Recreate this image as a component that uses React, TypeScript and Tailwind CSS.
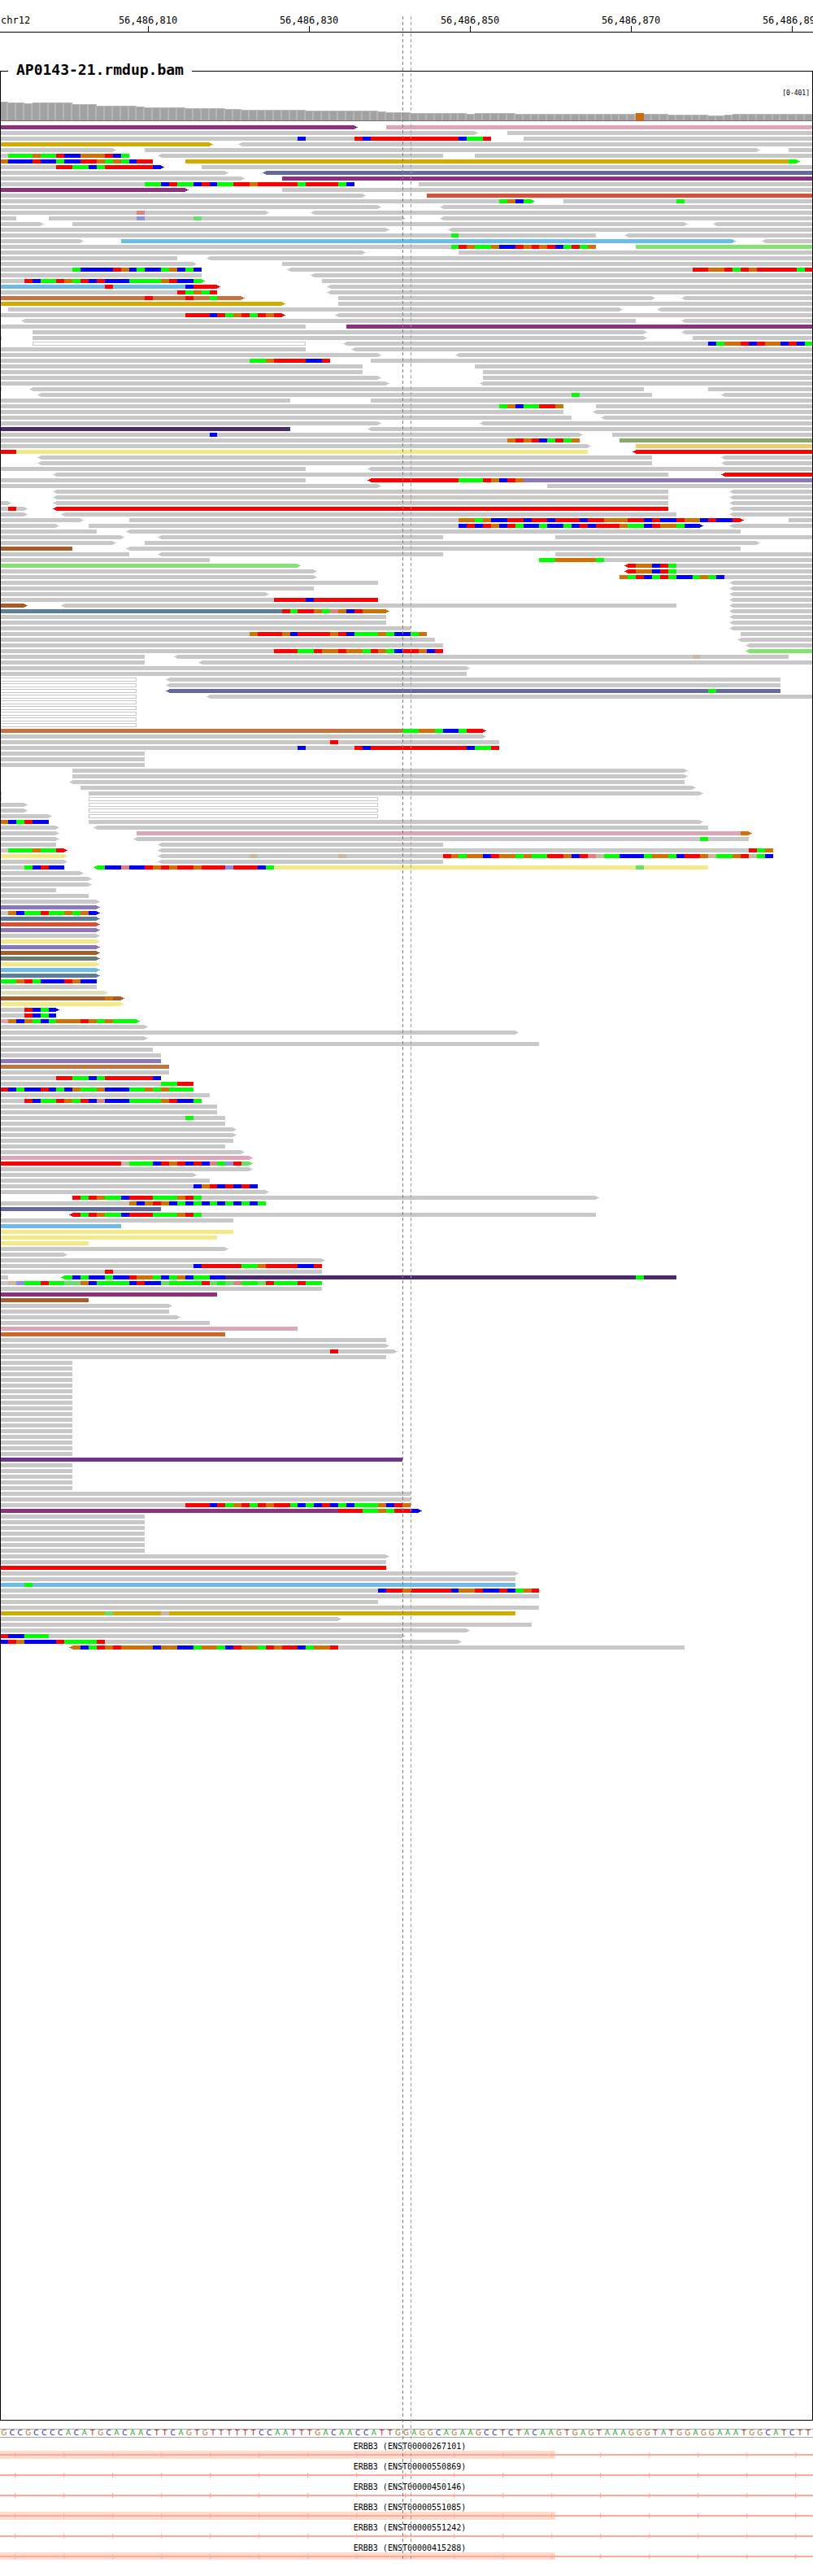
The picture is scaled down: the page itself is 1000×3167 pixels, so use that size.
import React from 'react';

// colour keys used in the read strings below
const COLORS: Record<string, string> = {
  g: '#c8c8c8', a: '#00ff00', c: '#0000ff', o: '#d17105', t: '#ff0000',
  p: '#8f2f7f', P: '#dba6b6', y: '#d4aa00', s: '#656a9c', r: '#d85038',
  l: '#6cbce6', L: '#84e174', b: '#c3743f', d: '#4b2a6e', n: '#8aa865',
  u: '#e8d070', e: '#f3ea87', v: '#8c78b8', w: '#a65d29', T: '#5b7f9a',
  k: '#6e7a6e', f: '#dce5b9', m: '#70368f', O: '#cd6628', R: '#e08080',
  B: '#9090e0', A: '#66e066', G: '#c8b8a0', x: '#ffffff',
};

// one string per row, reads split by a space: start colour break colour ... end, < or > for the strand arrow
const ROWS: string[] = [
  '0p686> 745P1568',
  '0g919> 978g1568',
  '0g574c590g684t699c714t884c900a931t947 1010g1568',
  '0y404> <465g1568',
  '0g219> 279g1461> 1521g1568',
  '0g16a63o78a108t124c155o202t218c234a248 <310g855 916g1568',
  '0o16c63t78c108a124c155t187o202a218o234a248c263t295 358y1522a1538>',
  '0g108t140a171c187a202t295c310> 389g1568',
  '0g434> <512s1568',
  '0g466> 544p1568',
  '0g279a310c326t342a373c389t403c419a450t481o497t574a590t652a668c684 808g1568',
  '0p358> 544g1568',
  '0g700> 823r1568',
  '0g963a978o994c1010a1024> 1087g1305a1320g1568',
  '0g730> <855g1568',
  '0g263R279g513> <605g1568',
  '0g31 93g263B279g373A389g778> <855g1568',
  '0g78> 140g1320> <1382g1568',
  '0g745> <868g1568',
  '0g869a884g1149 <1210g1568',
  '0g155> 234l1414> <1475g1568',
  '0g869a884t900o916a947o963c994t1010o1024t1040o1055t1071c1087a1102t1118a1134o1149 1226L1568',
  '0g700> 884g1568',
  '0g342 <403g1568',
  '0g373> 544g1568',
  '0g140a155c218t234o248c263a279c310a326o342c358a373c389 <558g1334t1366o1397t1413a1428t1444o1460t1537a1552t1568',
  '0g389 <605g1568',
  '0g47t63c78a108t124o140a155t171c187t202c248a310o326t342c373a389> 621g1568',
  '0l202t218l358c373t419> <636g1568',
  '0g342t358a373o389a403t419 <636g1568',
  '0b279t295b358t373b403a419b466> 652g1258> <1320g1568',
  '0y544> 652g1568',
  '16g1196> <1272g1568',
  '0g358t403c419t434a450o466t481a497t513o528t544> <652g1568',
  '<47g1226 <1320g1568',
  '0g590 668p1568',
  '63g1243> <1320g1568',
  '0g3 63g1243> 1334g1568',
  '63x590> <668g1366c1382a1397o1428t1444c1460t1475o1505c1521t1537c1552a1568',
  '0g590 <683g1568',
  '0g730> <884g1568',
  '0g481a513o528t590c621t636 714g1568',
  '0g699 916g1568',
  '0g699 931g1568',
  '0g730> 931g1568',
  '0g745> <931g1568',
  '0g3 <63g1243 1366g1568',
  '<78g1102a1118g1258 <1397g1568',
  '0g558 714g1568',
  '0g963a978o994c1010a1040t1071o1087 1149g1568',
  '0g1087 <1149g1568',
  '0g1102 <1165g1568',
  '0g730> <931g1568',
  '0d558 <714g1568',
  '0g403c419g1118> 1180g1568',
  '0g978o994t1010o1024t1040c1055a1071t1087a1102o1118 1196n1568',
  '0g1134> 1226u1568',
  '0t31e1134 <1226t1568',
  '<78g1258 <1397g1568',
  '<78g1258 <1397g1568',
  '0g590 <714g1568',
  '<108g1289 <1397t1568',
  '0g590 <714t884a931t947o963c978t994o1010v1568',
  '0g730> 1055g1568',
  '<108g1289 <1413g1568',
  '<108g1289 <1413g1568',
  '0g16> <108g1289 <1413g1568',
  '0g16t31g47> <108t1289 <1413g1568',
  '0g47> <124g1305 <1413g1568',
  '0g155> 248g884o916a931o947c978t1010c1024t1055c1071t1118c1134t1165o1210t1242c1258t1273c1305t1320o1350c1366t1382c1413t1428> 1521g1568',
  '0g108> 171g884c900t916c931t947o963c978t994a1010c1040a1055c1087a1102c1118t1134c1149t1196o1210a1242c1258t1273o1305a1320c1350> <1413g1568',
  '0g187 <248g1428',
  '0g233> <310g855 1071g1568',
  '0g219> 279g1461>',
  '0w140 <248g1428',
  '0g248 <310g855 1071g1568',
  '0g403 1040a1071o1149a1165g1568',
  '0L574> <1210t1226o1258c1273t1289a1305g1568',
  '0g605> <1210t1226o1258c1273t1289a1305g1568',
  '0g605> 1196o1210a1226t1242c1258a1273t1289a1305c1334a1350o1366a1382c1397g1568',
  '0g729 <1413g1568',
  '0g605 <1413g1568',
  '0g513> <1413g1568',
  '0g528t590c605t729 <1413g1568',
  '0w47> <124g1305 <1413g1568',
  '0T544t558a574t605o621a636R652o668c684t699o745> <1413g1568',
  '0g745 <1413g1568',
  '0g745 <1413g1568',
  '0g792 <1413g1568',
  '0g481o497t544o558c574t636o652t668c684a729o745a760c792a808o823 1428g1568',
  '0g839 <1428g1568',
  '0g855 <1444g1568',
  '0g528t574a605t621o652t668o699a714t729o745a760c776t808o823c839t855 <1444L1568',
  '0g279 <342g1334G1350g1521',
  '0g279 <389g1568',
  '0g900>',
  '0g900',
  '0x263 <326g1505',
  '0x263 <326g1505',
  '0x263 <326s1366a1382s1505',
  '0x263 <403g1568',
  '0x263', '0x263', '0x263', '0x263', '0x263',
  '0b776a808o839a855c884a900t931>',
  '0g931>',
  '0g636t652g963',
  '0g574c590g684t699c714t900c916a947t963',
  '0g279', '0g279', '0g279',
  '140g1320>',
  '140g1320>',
  '<140g1320',
  '155g1336>',
  '0g3 171g1350>',
  '0g3 171x730>',
  '0g47> 171x730>',
  '0g47> 171x730>',
  '0g93> 171x730>',
  '0o16c31a47t63c93 171g1350>',
  '0g108> <186g1366',
  '0g108> 263P1428o1444>',
  '0g108> <263g1350a1366g1444',
  '0g108 <310g855',
  '0g16a63o78a108t124> <310g1444t1460a1475o1490',
  '0e124> <310g481G497g652G668g855t869o884a900o931c947t963o994a1010o1024a1055t1087o1102c1118t1134R1149G1165a1196c1242a1258o1289a1305c1320t1350o1366G1382a1413o1428t1444G1460a1475c1490',
  '0g124> <310g855',
  '0g47a63c78t93c124 <187a202c234R248c279t295o310t326o342t373o389t434B450t497c513a528e1226A1242e1366',
  '0g155>',
  '0g171>',
  '0g171>',
  '0g108',
  '0g171',
  '0g187>',
  '0v187>',
  '0g16o31c47a78t93a124o140a155o171c187>',
  '0T187>',
  '0r187>',
  '0v187>',
  '0g187>',
  '0e187>',
  '0v187>',
  '0w187>',
  '0k187>',
  '0e187>',
  '0l187>',
  '0T187>',
  '0a31o47t63a78c124t140o155c187',
  '0g187',
  '0f202>',
  '0w202o218w234>',
  '0e234>',
  '0g47t63c78a93c108>',
  '0g47t63c78a93c108',
  '0P16o31c47o63a78c93a108o155t171o187a202o218a263>',
  '0g279>',
  '0g994>',
  '0g279>',
  '0g1040',
  '0g295',
  '0g310',
  '0v310',
  '0b326',
  '0g326',
  '0g108t140a171c187a202t295c310',
  '0g310a342t373',
  '0t16c31a47c78t93c108a124c140o155a187o202c248a279o295a310o326a373',
  '0g403',
  '0g47t63c78a108t124o140a155t171c187R202c248a310o326t342c373a389',
  '0g419',
  '0g419',
  '0g358a373g434',
  '0g434',
  '0g450>',
  '0g450>',
  '0g450',
  '0g434',
  '0g466>',
  '0P481>',
  '0t234G248a295c310t326o342t358c373t389c403R419a434B450t466A481>',
  '0g481>',
  '0g373>',
  '0g403',
  '0g373c389o403t419c434t450c466t481c497',
  '0g513>',
  '140t155a171t187o202a234c248t295a342o358t373a389g1149>',
  '0g248o263c279o295t310o326c342a358c373a389c403a419c434a450c466a481c497a513',
  '0s310',
  '0g3 <140t155a171t187o202a234c248t295a342o358t373a389g1149',
  '0g450',
  '0l234',
  '0e450',
  '0e419',
  '0e171',
  '0g434>',
  '0g124>',
  '0g621>',
  '0g373c389t466a497o513t574c605t621',
  '0g202t218g621',
  '0g16 <124a140c155a171c202a218c248t263o295a310c326a342o358c373a403c434d1226a1242d1305',
  '0g16G31B47a78t93a124A155o171c187a248c263t279c310A326a389t403A419a434A450R466a497A513t528a574t590a621',
  '0g621',
  '0p419',
  '0w171',
  '0g326>',
  '0g326',
  '0g342>',
  '0g403',
  '0P574',
  '0O434',
  '0g745',
  '0g745>',
  '0g636t652g760>',
  '0g745',
  ...Array<string>(17).fill('0g140'),
  '0m776',
  ...Array<string>(5).fill('0g140'),
  '0g792',
  '0g792',
  '0g358t403c419t434a450o466t481a497t513o528t558a574c590a605c621t636c652a668c684a730o745c760t776o792',
  '0p652t699a730o745a760t792c808>',
  ...Array<string>(7).fill('0g279'),
  '0g745>',
  '0g745',
  '0t745',
  '0g994>',
  '0g994',
  '0l47a63l994',
  '0g730c745t776o792t869c884o916t931c963t978c994a1010o1024t1040',
  '0g1040',
  '0g730',
  '0g1040',
  '0y202A218y310G326y994',
  '0g652>',
  '0g1024',
  '0g900>',
  '0t16c47a93g778>',
  '0c16t31o47c108t124a187t202g885>',
  '<140o155c171a187t202o218t234o295c310o342c373a389o419a434c450t466o497a513t528o544t574c590a605o636t652g1320',
];

// [end of the run, top of the bar]
const COVERAGE: [number, number][] = [
  [16, 125], [47, 126], [63, 127], [140, 126], [187, 128], [263, 130], [279, 131], [358, 132],
  [434, 133], [466, 134], [590, 135], [729, 136], [745, 137], [792, 138], [900, 139], [916, 140],
  [994, 139], [1226, 140], [1240, 139], [1289, 140], [1366, 141], [1397, 142], [1413, 141], [1568, 140],
];

const SEQUENCE = 'GCCGCCCCACATGCACAACTTCAGTGTTTTTTCCAATTTGACAACCATTGGAGGCAGAAGCCTCTACAAGTGAGTAAAGGGTATGGAGGAAATGGCATCTT';

const BASE_COLORS: Record<string, string> = {
  A: 'text-[#1f9f1f]',
  C: 'text-[#2a2aa5]',
  G: 'text-[#a8702c]',
  T: 'text-[#b31818]',
};

const GENES = [
  { name: 'ERBB3 (ENST00000267101)', exon: 10 },
  { name: 'ERBB3 (ENST00000550869)', exon: 0 },
  { name: 'ERBB3 (ENST00000450146)', exon: 0 },
  { name: 'ERBB3 (ENST00000551085)', exon: 10 },
  { name: 'ERBB3 (ENST00000551242)', exon: 0 },
  { name: 'ERBB3 (ENST00000415288)', exon: 9 },
];

const TICKS = ['56,486,810', '56,486,830', '56,486,850', '56,486,870', '56,486,890'];

const px = (k: number) => Math.round(9.9 * k + 0.1);
const snap = (z: number) => px(Math.round(z / 15.52));

const Read: React.FC<{ token: string; y: number }> = ({ token, y }) => {
  const body = token.replace(/[<>]/g, '');
  const parts = [...body.matchAll(/(\d+)([a-zA-Z])/g)];
  const stops = [...parts.map((p) => Number(p[1])), Number(body.match(/(\d+)$/)![1])];
  const first = snap(stops[0]);
  const last = Math.max(snap(stops[stops.length - 1]), first + 2);
  const startColor = COLORS[parts[0][2]];
  const endColor = COLORS[parts[parts.length - 1][2]];

  if (parts[0][2] === 'x') {
    return <rect x={first + 0.5} y={y + 0.5} width={last - first - 1} height={4} fill="#fff" stroke="#c8c8c8" />;
  }

  return (
    <g>
      {parts.map((p, i) => {
        const x1 = snap(stops[i]);
        const x2 = i === parts.length - 1 ? last : snap(stops[i + 1]);
        return <rect key={i} x={x1} y={y} width={x2 - x1} height={5} fill={COLORS[p[2]]} />;
      })}
      {token.endsWith('>') && (
        <g fill={endColor}>
          <rect x={last} y={y + 1} width={2} height={3} />
          <rect x={last + 2} y={y + 2} width={2} height={1} />
        </g>
      )}
      {token.startsWith('<') && (
        <g fill={startColor}>
          <rect x={first - 2} y={y + 1} width={2} height={3} />
          <rect x={first - 4} y={y + 2} width={2} height={1} />
        </g>
      )}
    </g>
  );
};

const Coverage: React.FC = () => {
  const bars = [];
  for (let k = 0; k < 101; k++) {
    const mid = (k + 0.5) * 15.52;
    const run = COVERAGE.find((c) => mid < c[0]) ?? COVERAGE[COVERAGE.length - 1];
    const x = px(k);
    const w = px(k + 1) - x;
    bars.push(
      <g key={k}>
        <rect x={x} y={run[1]} width={w} height={148 - run[1]} fill={k === 79 ? '#d1690e' : '#b6b6b6'} />
        {k !== 79 && <rect x={x} y={run[1] + 1} width={w - 2} height={147 - run[1]} fill="#a2a2a2" />}
      </g>,
    );
  }
  return (
    <g>
      {bars}
      <rect x={0} y={148} width={1000} height={1} fill="#6f6f6f" />
    </g>
  );
};

const Gene: React.FC<{ name: string; exon: number }> = ({ name, exon }) => (
  <div className="h-[25px]">
    <div className="h-[15px] pt-[4px] text-center text-[10px] leading-[11px] text-black whitespace-nowrap pl-[8px]">{name}</div>
    <svg width="1000" height="10" className="block">
      {exon > 0 && <rect x={0} y={0} width={683} height={exon} fill="#ffdccc" />}
      <rect x={0} y={4} width={1000} height={2} fill="#ffa89c" />
      {Array.from({ length: 17 }, (_, i) => {
        const x = 18 + i * 60;
        return <polygon key={i} points={`${x},1.5 ${x + 2.5},5 ${x},8.5`} fill="#ffa89c" />;
      })}
    </svg>
  </div>
);

export default function App() {
  return (
    <div className="relative w-[1000px] h-[3167px] overflow-hidden bg-white font-['DejaVu_Sans_Mono',monospace]">
      {/* ruler */}
      <div className="flex h-[40px] border-b border-black text-[12px] leading-[13px] text-black">
        <div className="w-[83px] shrink-0 pt-[19px] pl-px">chr12</div>
        {TICKS.map((t) => (
          <div key={t} className="w-[198px] shrink-0 pt-[19px] text-center whitespace-nowrap">
            <div>{t}</div>
            <div className="mx-auto h-[7px] w-px bg-black" />
          </div>
        ))}
      </div>

      {/* alignment track */}
      <div className="relative mt-[47px] h-[2889px] border border-black">
        <div className="absolute -top-[12px] left-[9px] bg-white px-[10px] text-[18px] leading-[20px] font-bold text-black whitespace-nowrap">
          AP0143-21.rmdup.bam
        </div>
        <div className="absolute right-[3px] top-[22px] text-[8px] leading-[10px] text-black">[0-401]</div>
        <svg width="998" height="2887" viewBox="1 88 998 2887" shapeRendering="crispEdges" className="block">
          <Coverage />
          {ROWS.map((row, r) =>
            row.split(' ').map((token, i) => <Read key={`${r}-${i}`} token={token} y={154 + 7 * r} />),
          )}
        </svg>
      </div>

      {/* reference sequence */}
      <div className="mt-[10px] flex h-[11px] border-y border-[#a8a8a8] text-[9px] leading-[9px] font-['DejaVu_Sans',sans-serif]">
        {SEQUENCE.split('').map((base, i) => (
          <span key={i} className={`w-[9.9px] shrink-0 text-center ${BASE_COLORS[base]}`}>
            {base}
          </span>
        ))}
      </div>

      {/* gene models */}
      <div className="mt-px">
        {GENES.map((g) => (
          <Gene key={g.name} name={g.name} exon={g.exon} />
        ))}
      </div>

      {/* centre guide lines */}
      <svg width="1000" height="3167" className="absolute left-0 top-0 pointer-events-none">
        <line x1="495.5" y1="20" x2="495.5" y2="3146" stroke="#808080" strokeDasharray="4 3" />
        <line x1="505.5" y1="20" x2="505.5" y2="3146" stroke="#a0a0a0" strokeDasharray="4 3" />
      </svg>
    </div>
  );
}
